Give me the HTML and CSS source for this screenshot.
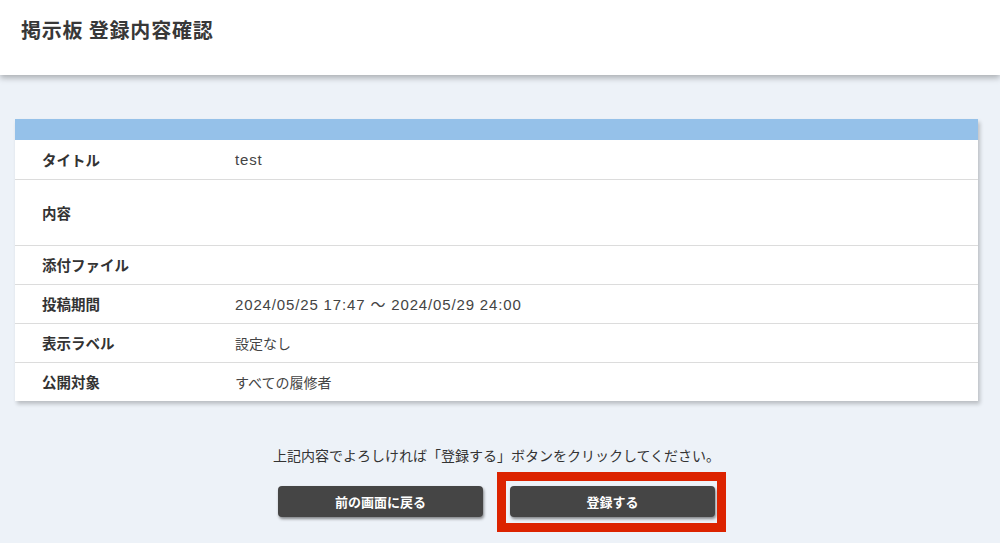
FILE: index.html
```html
<!DOCTYPE html>
<html lang="ja">
<head>
    <meta charset="UTF-8">
    <meta name="viewport" content="width=device-width, initial-scale=1.0">
    <title>掲示板 登録内容確認</title>
    <link rel="stylesheet" href="styles.css">
</head>
<body>
    <header class="page-header">
        <h1>掲示板 登録内容確認</h1>
    </header>

    <main class="content">
        <div class="confirm-card">
            <div class="card-bar"></div>
            <table class="confirm-table">
                <tr>
                    <th>タイトル</th>
                    <td class="latin">test</td>
                </tr>
                <tr class="tall">
                    <th>内容</th>
                    <td></td>
                </tr>
                <tr>
                    <th>添付ファイル</th>
                    <td></td>
                </tr>
                <tr>
                    <th>投稿期間</th>
                    <td class="latin">2024/05/25 17:47 ～ 2024/05/29 24:00</td>
                </tr>
                <tr>
                    <th>表示ラベル</th>
                    <td>設定なし</td>
                </tr>
                <tr>
                    <th>公開対象</th>
                    <td>すべての履修者</td>
                </tr>
            </table>
        </div>

        <p class="notice">上記内容でよろしければ「登録する」ボタンをクリックしてください。</p>

        <div class="actions">
            <button class="btn" type="button">前の画面に戻る</button>
            <button class="btn btn-marked" type="button">登録する</button>
        </div>
    </main>
</body>
</html>
```

FILE: styles.css
```css
body {
    font-family: "Noto Sans CJK JP", "Noto Sans", sans-serif;
    margin: 0;
    padding: 0;
    background: #edf2f8;
    color: #333;
    height: 543px;
    overflow: hidden;
}

.page-header {
    background: #fff;
    height: 75px;
    box-shadow: 0 3px 6px rgba(0, 0, 0, 0.28);
    position: relative;
    z-index: 1;
}

.page-header h1 {
    margin: 0;
    padding: 16px 0 0 21px;
    font-size: 20px;
    font-weight: 700;
    letter-spacing: 0.8px;
    line-height: 28px;
    color: #383838;
}

.content {
    padding: 44px 22px 0 15px;
}

.confirm-card {
    background: #fff;
    box-shadow: 2px 3px 4px rgba(0, 0, 0, 0.22);
}

.card-bar {
    height: 21px;
    background: #95c1e9;
}

.confirm-table {
    width: 100%;
    border-collapse: collapse;
    font-size: 14px;
}

.confirm-table tr {
    height: 39px;
    border-top: 1px solid #dcdcdc;
}

.confirm-table tr:first-child {
    border-top: none;
}

.confirm-table tr.tall {
    height: 66px;
}

.confirm-table th {
    width: 193px;
    padding: 0 0 0 27px;
    text-align: left;
    font-weight: 700;
    font-size: 14.5px;
    color: #333;
}

.confirm-table td {
    padding: 0;
    color: #444;
}

/* dates and plain ascii values */
.confirm-table td.latin {
    font-family: "Liberation Sans", "Noto Sans CJK JP", sans-serif;
    font-size: 15px;
    letter-spacing: 0.85px;
}

.notice {
    margin: 44px 0 0;
    text-align: center;
    font-size: 14px;
    line-height: 20px;
    color: #333;
}

.actions {
    display: flex;
    justify-content: center;
    gap: 27px;
    margin-top: 21px;
}

.btn {
    width: 205px;
    height: 31px;
    background: #454545;
    color: #fff;
    border: none;
    border-radius: 4px;
    box-shadow: 1px 2px 3px rgba(0, 0, 0, 0.45);
    font-family: inherit;
    font-size: 13px;
    font-weight: 700;
    cursor: pointer;
}

.btn-marked {
    position: relative;
}

/* square highlight frame around the submit button */
.btn-marked::after {
    content: "";
    position: absolute;
    top: -14px;
    left: -13px;
    right: -11px;
    bottom: -15px;
    border: 9px solid #dc2300;
    pointer-events: none;
}
```
